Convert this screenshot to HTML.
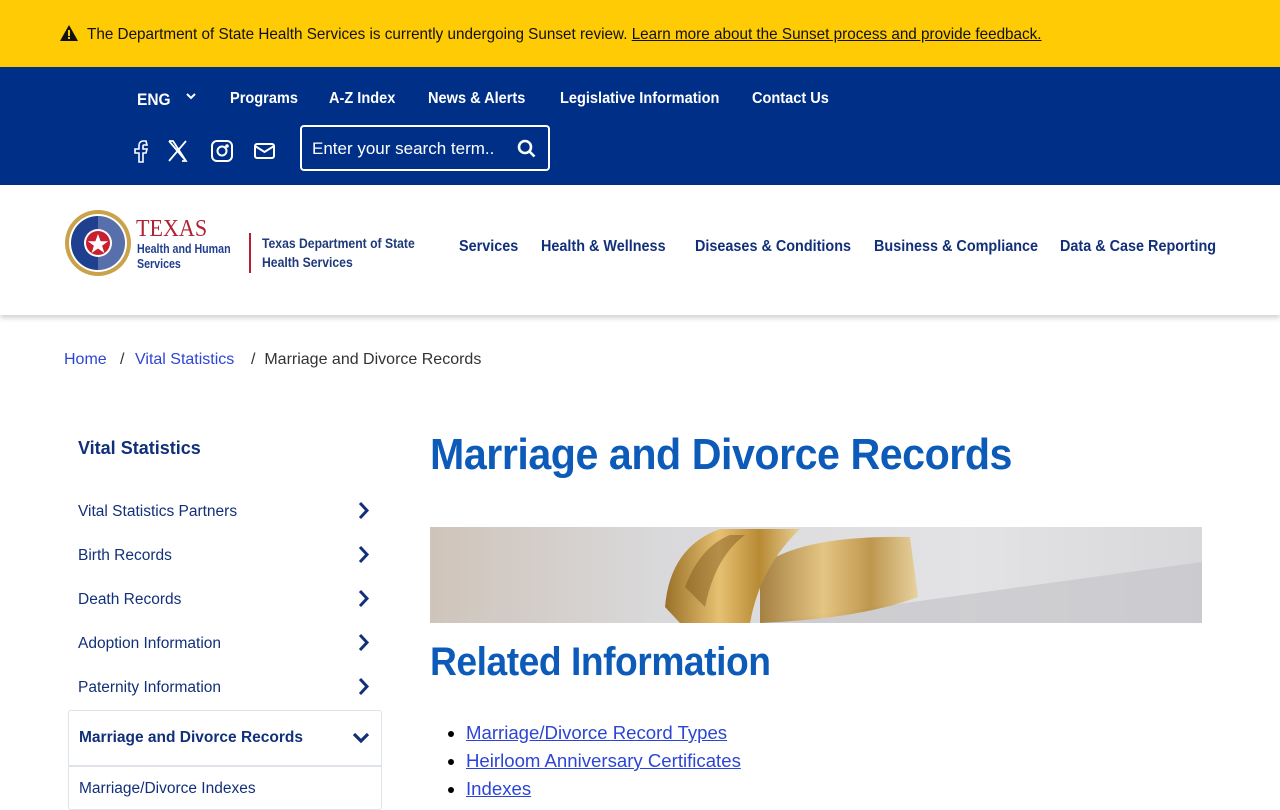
<!DOCTYPE html>
<html><head><meta charset="utf-8"><style>
*{box-sizing:border-box;margin:0;padding:0}
body{width:1280px;height:800px;overflow:hidden;font-family:"Liberation Sans",sans-serif;background:#fff;position:relative}
.abs{position:absolute}
.sx{transform-origin:0 0}
.alert{top:0;left:0;width:1280px;height:67px;background:#ffcb05;font-size:16px;color:#111}
.alert span{position:absolute;top:26px;left:87px;white-space:nowrap;transform:scaleX(.954);transform-origin:0 0}
.alert a{color:#111}
.blue{top:67px;left:0;width:1280px;height:118px;background:#002f87;color:#fff}
.nav1{font-size:16px;font-weight:bold;white-space:nowrap;top:23px;transform:scaleX(.91);transform-origin:0 0}
.search{left:300px;top:58px;width:250px;height:46px;border:2px solid #fff;border-radius:4px}
.search span{position:absolute;left:10px;top:12px;font-size:17px;white-space:nowrap}
.hdr{top:185px;left:0;width:1280px;height:130px;background:#fff;box-shadow:0 3px 5px rgba(0,0,0,.18)}
.mnav{top:53px;font-size:16px;font-weight:bold;color:#12307a;white-space:nowrap;transform:scaleX(.9);transform-origin:0 0}
.crumb{top:351px;font-size:16px;white-space:nowrap}
.side{left:78px;font-size:15.5px;color:#12307a;white-space:nowrap}
.chev{left:357px}
h1{position:absolute;left:430px;top:430px;font-size:44px;color:#0d5bb8;font-weight:bold;white-space:nowrap;letter-spacing:-.5px;transform:scaleX(.936);transform-origin:0 0}
h2{position:absolute;left:430px;top:640px;font-size:40px;color:#0d5bb8;font-weight:bold;white-space:nowrap;letter-spacing:-.5px;transform:scaleX(.93);transform-origin:0 0}
ul{position:absolute;left:466px;top:719px;font-size:18.6px;line-height:28px}
ul a{color:#2c45d6}
</style></head><body>
<div class="abs alert">
<svg class="abs" style="left:60px;top:25px" width="18" height="16" viewBox="0 0 18 16"><path d="M9 0L18 16H0Z" fill="#111"/><rect x="8" y="5" width="2" height="6" fill="#ffcb05"/><rect x="8" y="12" width="2" height="2" fill="#ffcb05"/></svg>
<span>The Department of State Health Services is currently undergoing Sunset review. <a href="#">Learn more about the Sunset process and provide feedback.</a></span></div>
<div class="abs blue">
<div class="abs nav1" style="left:137px;font-size:17px">ENG</div>
<svg class="abs" style="left:186px;top:26px" width="10" height="7"><path d="M1 1l4 4 4-4" stroke="#fff" stroke-width="2" fill="none"/></svg>
<div class="abs nav1" style="left:230px">Programs</div>
<div class="abs nav1" style="left:329px">A-Z Index</div>
<div class="abs nav1" style="left:428px">News &amp; Alerts</div>
<div class="abs nav1" style="left:560px">Legislative Information</div>
<div class="abs nav1" style="left:752px">Contact Us</div>
<svg class="abs" style="left:130px;top:71px" width="150" height="26" fill="none" stroke="#fff" stroke-width="2">
<path d="M16 3h-3a4 4 0 0 0-4 4v4H5v4h4v9h4v-9h3l1-4h-4V8a1 1 0 0 1 1-1h3z" stroke-width="1.6"/>
<path d="M39 3l17 20M56 3L39 23M39 3h4l13 20h-4" stroke-width="1.8"/>
<rect x="82" y="3" width="20" height="20" rx="5"/><circle cx="92" cy="13" r="4.5"/><circle cx="97" cy="8" r=".8" fill="#fff"/>
<rect x="125" y="6" width="19" height="14" rx="2"/><path d="M125 8l9.5 6 9.5-6"/></svg>
<div class="abs search"><span>Enter your search term..</span>
<svg class="abs" style="left:215px;top:12px" width="20" height="20" fill="none" stroke="#fff" stroke-width="2.6"><circle cx="8" cy="8" r="6"/><path d="M12.5 12.5l5 5"/></svg></div>
</div>
<div class="abs hdr">
<svg class="abs" style="left:63px;top:23px" width="70" height="70" viewBox="0 0 70 70"><circle cx="35" cy="35" r="33" fill="#c9a24a"/><circle cx="35" cy="35" r="29" fill="#fff"/><circle cx="35" cy="35" r="27" fill="#1f3f8f"/><path d="M35 8a27 27 0 0 1 0 54z" fill="#fff" opacity=".25"/><circle cx="35" cy="35" r="14" fill="#fff"/><circle cx="35" cy="35" r="12" fill="#c8202f"/><path d="M35 26l2.6 7.2h7.6l-6.1 4.5 2.3 7.3-6.4-4.5-6.4 4.5 2.3-7.3-6.1-4.5h7.6z" fill="#fff"/></svg>
<div class="abs" style="left:136px;top:32px;font-family:'Liberation Serif',serif;font-size:24px;color:#b22234;line-height:1;transform:scaleX(.92);transform-origin:0 0">TEXAS</div>
<div class="abs" style="left:137px;top:56px;font-size:13px;font-weight:bold;color:#1f3f8f;line-height:15px;white-space:nowrap;transform:scaleX(.82);transform-origin:0 0">Health and Human<br>Services</div>
<div class="abs" style="left:249px;top:48px;width:2px;height:40px;background:#b22234"></div>
<div class="abs" style="left:262px;top:49px;font-size:14px;font-weight:bold;color:#1f3a7a;line-height:19px;white-space:nowrap;transform:scaleX(.87);transform-origin:0 0">Texas Department of State<br>Health Services</div>
<div class="abs mnav" style="left:459px">Services</div>
<div class="abs mnav" style="left:541px">Health &amp; Wellness</div>
<div class="abs mnav" style="left:695px">Diseases &amp; Conditions</div>
<div class="abs mnav" style="left:874px">Business &amp; Compliance</div>
<div class="abs mnav" style="left:1060px">Data &amp; Case Reporting</div>
</div>
<div class="abs crumb" style="left:64px;color:#2c45d6">Home</div>
<div class="abs crumb" style="left:120px;color:#333">/</div>
<div class="abs crumb" style="left:135px;color:#2c45d6">Vital Statistics</div>
<div class="abs crumb" style="left:251px;color:#333">/&nbsp;&nbsp;Marriage and Divorce Records</div>
<div class="abs side" style="top:438px;font-size:18px;font-weight:bold">Vital Statistics</div>
<div class="abs side" style="top:503px">Vital Statistics Partners</div>
<div class="abs side" style="top:547px">Birth Records</div>
<div class="abs side" style="top:591px">Death Records</div>
<div class="abs side" style="top:635px">Adoption Information</div>
<div class="abs side" style="top:679px">Paternity Information</div>
<svg class="abs chev" style="top:501px" width="14" height="200" fill="none" stroke="#12307a" stroke-width="3"><path d="M3 2l7 7.5-7 7.5M3 46l7 7.5-7 7.5M3 90l7 7.5-7 7.5M3 134l7 7.5-7 7.5M3 178l7 7.5-7 7.5"/></svg>
<div class="abs" style="left:68px;top:710px;width:314px;height:100px;border:1px solid #dfe3ea;border-radius:3px"></div>
<div class="abs" style="left:68px;top:765px;width:314px;height:2px;background:#dfe3ea"></div>
<div class="abs side" style="left:79px;top:729px;font-weight:bold">Marriage and Divorce Records</div>
<svg class="abs" style="left:352px;top:732px" width="18" height="12" fill="none" stroke="#12307a" stroke-width="3.2"><path d="M2 2l7 7 7-7"/></svg>
<div class="abs side" style="left:79px;top:780px">Marriage/Divorce Indexes</div>
<h1>Marriage and Divorce Records</h1>
<svg class="abs" style="left:430px;top:527px" width="772" height="96">
<defs><linearGradient id="bg" x1="0" x2="1"><stop offset="0" stop-color="#cfc4ba"/><stop offset=".3" stop-color="#d9d9db"/><stop offset=".7" stop-color="#e3e3e5"/><stop offset="1" stop-color="#d8d8db"/></linearGradient>
<linearGradient id="g" x1="0" x2="1"><stop offset="0" stop-color="#9a7028"/><stop offset=".4" stop-color="#e6c172"/><stop offset=".7" stop-color="#b88a34"/><stop offset="1" stop-color="#e8cf94"/></linearGradient></defs>
<rect width="772" height="96" fill="url(#bg)"/>
<path d="M330 96L772 35V96z" fill="#c6c6ca" opacity=".7"/>
<path d="M330 40 Q370 8 480 10 L488 70 Q430 92 330 96z" fill="url(#g)" opacity=".85"/>
<path d="M235 80 Q240 20 290 2 L370 2 Q330 40 320 96 L250 96z" fill="url(#g)"/>
<path d="M255 60 Q270 20 300 8 L315 8 Q285 30 275 80z" fill="#7a5218" opacity=".45"/>
</svg>
<h2>Related Information</h2>
<ul><li><a href="#">Marriage/Divorce Record Types</a></li><li><a href="#">Heirloom Anniversary Certificates</a></li><li><a href="#">Indexes</a></li></ul>
</body></html>
